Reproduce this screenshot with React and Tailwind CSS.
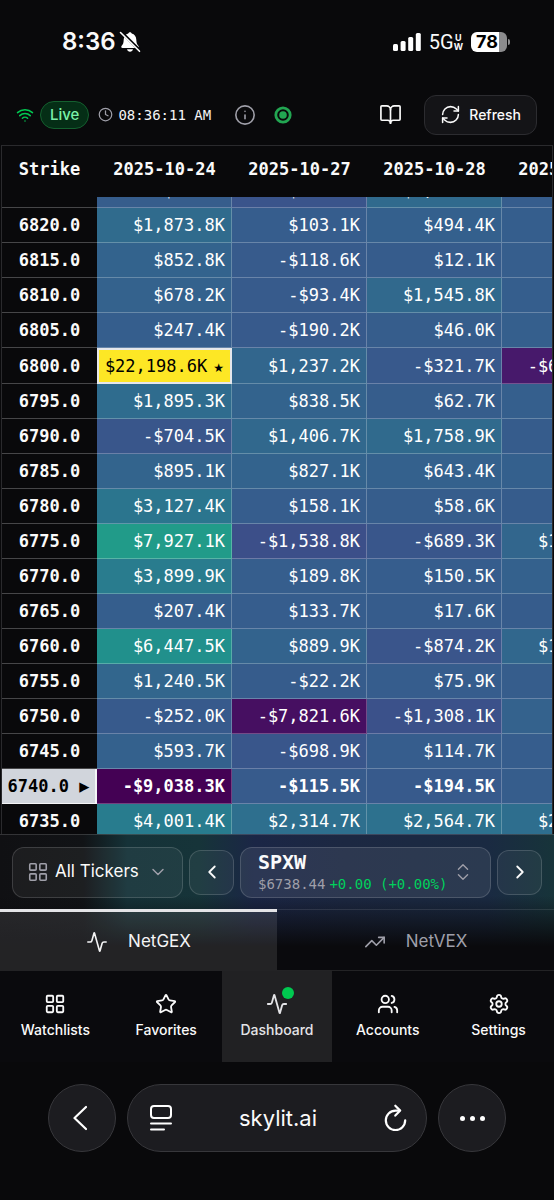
import { useLayoutEffect, useRef } from 'react';
import {
  Activity,
  BookOpen,
  ChevronDown,
  ChevronLeft,
  ChevronRight,
  ChevronsUpDown,
  Clock,
  Info,
  LayoutGrid,
  RefreshCw,
  Settings,
  Star,
  TrendingUp,
  Users,
  Wifi,
} from 'lucide-react';

const VIRIDIS = [
  [68, 1, 84],
  [72, 36, 117],
  [65, 68, 135],
  [53, 95, 141],
  [42, 120, 142],
  [33, 145, 140],
  [34, 168, 132],
  [68, 191, 112],
  [122, 209, 81],
  [189, 223, 38],
  [253, 231, 37],
];

const DATES = ['2025-10-24', '2025-10-27', '2025-10-28', '2025-10-29'];

const ROWS = [
  [6825, 61.2, -956.4, 1764.2, 96.3],
  [6820, 1873.8, 103.1, 494.4, 210.4],
  [6815, 852.8, -118.6, 12.1, 188.2],
  [6810, 678.2, -93.4, 1545.8, 240.7],
  [6805, 247.4, -190.2, 46.0, 315.9],
  [6800, 22198.6, 1237.2, -321.7, -6855.3],
  [6795, 1895.3, 838.5, 62.7, 322.8],
  [6790, -704.5, 1406.7, 1758.9, 2.5],
  [6785, 895.1, 827.1, 643.4, 518.6],
  [6780, 3127.4, 158.1, 58.6, 5.3],
  [6775, 7927.1, -1538.8, -689.3, 1214.5],
  [6770, 3899.9, 189.8, 150.5, 604.1],
  [6765, 207.4, 133.7, 17.6, 4.2],
  [6760, 6447.5, 889.9, -874.2, 1342.6],
  [6755, 1240.5, -22.2, 75.9, 54.8],
  [6750, -252.0, -7821.6, -1308.1, 731.4],
  [6745, 593.7, -698.9, 114.7, 112.9],
  [6740, -9038.3, -115.5, -194.5, 48.6],
  [6735, 4001.4, 2314.7, 2564.7, 2208.3],
];

const SPOT_STRIKE = 6740;
const VALUES = ROWS.flatMap((row) => row.slice(1));
const MIN = Math.min(...VALUES);
const MAX = Math.max(...VALUES);

function heat(value) {
  const t = ((value - MIN) / (MAX - MIN)) * (VIRIDIS.length - 1);
  const i = Math.min(Math.floor(t), VIRIDIS.length - 2);
  const mix = VIRIDIS[i].map((c, k) => Math.round(c + (VIRIDIS[i + 1][k] - c) * (t - i)));
  return `rgb(${mix.join(',')})`;
}

function money(value) {
  const digits = Math.abs(value).toLocaleString('en-US', {
    minimumFractionDigits: 1,
    maximumFractionDigits: 1,
  });
  return `${value < 0 ? '-' : ''}$${digits}K`;
}

function StatusBar() {
  return (
    <div className="flex h-[84px] shrink-0 items-center justify-between pr-11 pl-[62px]">
      <div className="flex items-center gap-[3px]">
        <span className="text-2xl font-semibold">8:36</span>
        <svg width="22" height="22" viewBox="0 0 22 22" aria-label="Silent mode">
          <path
            d="M11 1.2c.9 0 1.6.6 1.7 1.4 2.9.8 4.5 3.1 4.6 6.2.1 3.600.9 4.800 2 6 .9 1 .5 2.200-.9 2.200H3.600c-1.400 0-1.800-1.200-.9-2.200 1.100-1.200 1.900-2.400 2-6 .1-3.100 1.700-5.400 4.600-6.200.1-.8.800-1.400 1.700-1.400z"
            fill="#fff"
          />
          <path d="M8 18.300h6c-.3 1.500-1.500 2.500-3 2.500s-2.700-1-3-2.500z" fill="#fff" />
          <path d="M2.600 1.200 21 19.600" stroke="#09090b" strokeWidth="3" />
          <path d="M1.500 1.500 20.500 20.300" stroke="#fff" strokeWidth="1.600" strokeLinecap="round" />
        </svg>
      </div>
      <div className="flex items-center">
        <svg width="28" height="18" viewBox="0 0 28 18" fill="#fff" aria-label="Signal strength">
          <rect x="0" y="11" width="5" height="7" rx="1.500" />
          <rect x="7.600" y="8" width="5" height="10" rx="1.500" />
          <rect x="15.200" y="4" width="5" height="14" rx="1.500" />
          <rect x="22.800" y="0" width="5" height="18" rx="1.500" />
        </svg>
        <span className="ml-2 font-['Roboto',sans-serif] text-xl">5G</span>
        <span className="flex flex-col items-center text-[9px] leading-[9px] font-bold">
          <span>U</span>
          <span>W</span>
        </span>
        <div className="ml-2 flex items-center gap-px">
          <span className="flex h-5 w-9 items-center justify-center rounded-md bg-linear-to-r from-white from-78% to-[#8b8b8d] to-78% pr-1 text-lg font-bold text-black">
            78
          </span>
          <span className="h-[6px] w-[2px] rounded-r-full bg-[#8b8b8d]" />
        </div>
      </div>
    </div>
  );
}

function Toolbar() {
  return (
    <header className="flex h-[61px] shrink-0 items-center pr-[17px] pl-4">
      <Wifi size={18} className="text-green-500" />
      <span className="ml-1.5 rounded-full border border-[#14602f] bg-[#052e16] px-[9px] py-px text-[15px] leading-6 font-medium text-green-300">
        Live
      </span>
      <Clock size={15} className="ml-[9px] text-zinc-400" />
      <time className="ml-[5px] font-['DejaVu_Sans_Mono',monospace] text-sm whitespace-nowrap text-zinc-100">
        08:36:11 AM
      </time>
      <button type="button" aria-label="Information" className="ml-[23px] text-zinc-400">
        <Info size={22} strokeWidth={1.750} />
      </button>
      <svg width="18" height="18" viewBox="0 0 18 18" className="ml-[18px]" aria-label="Market open">
        <circle cx="9" cy="9" r="7.200" fill="none" stroke="#22a652" strokeWidth="2.800" />
        <circle cx="9" cy="9" r="3.800" fill="#22a652" />
      </svg>
      <button type="button" aria-label="Guide" className="ml-auto">
        <BookOpen size={23} strokeWidth={1.750} />
      </button>
      <button
        type="button"
        className="ml-[22px] flex h-10 items-center gap-2 rounded-xl border border-[#2c2c30] bg-[#141417] px-[15px] text-sm font-medium"
      >
        <RefreshCw size={21} strokeWidth={1.750} />
        Refresh
      </button>
    </header>
  );
}

function ValueCell({ value, bold }) {
  if (value === MAX) {
    return (
      <td
        className="h-9 border-2 border-gray-200 pr-1.5 text-right whitespace-nowrap text-black"
        style={{ backgroundColor: heat(value) }}
      >
        {money(value)}
        <span className="ml-1.5 font-['DejaVu_Sans',sans-serif] text-xs">★</span>
      </td>
    );
  }
  return (
    <td
      className={`h-[35px] border-r border-b border-white/25 pr-1.5 text-right whitespace-nowrap text-white ${bold ? 'font-bold' : ''}`}
      style={{ backgroundColor: heat(value) }}
    >
      {money(value)}
    </td>
  );
}

function HeatTable() {
  const scroller = useRef(null);
  useLayoutEffect(() => {
    scroller.current.scrollTop = 24;
  }, []);
  return (
    <main
      ref={scroller}
      className="mx-px min-h-0 flex-1 overflow-auto border-x border-t border-[#2a2a2d] [scrollbar-width:none]"
    >
      <table className="w-max table-fixed border-separate border-spacing-0 font-['DejaVu_Sans_Mono',monospace] text-[17px] leading-6">
        <colgroup>
          <col className="w-[95px]" />
          {DATES.map((date) => (
            <col key={date} className="w-[135px]" />
          ))}
        </colgroup>
        <thead>
          <tr>
            <th scope="col" className="sticky top-0 left-0 z-20 h-[51px] w-[95px] bg-[#09090b] pb-1.5">
              Strike
            </th>
            {DATES.map((date) => (
              <th key={date} scope="col" className="sticky top-0 z-10 h-[51px] w-[135px] bg-[#09090b] pb-1.5">
                {date}
              </th>
            ))}
          </tr>
        </thead>
        <tbody>
          {ROWS.map(([strike, ...values]) => {
            const spot = strike === SPOT_STRIKE;
            return (
              <tr key={strike}>
                <th
                  scope="row"
                  className={
                    spot
                      ? 'sticky left-0 border-r-2 border-b border-gray-100 bg-gray-300 whitespace-nowrap text-black'
                      : 'sticky left-0 border-b border-white/25 bg-[#09090b]'
                  }
                >
                  {strike.toFixed(1)}
                  {spot && ' ▶'}
                </th>
                {values.map((value, i) => (
                  <ValueCell key={DATES[i]} value={value} bold={spot} />
                ))}
              </tr>
            );
          })}
        </tbody>
      </table>
    </main>
  );
}

function TickerBar() {
  return (
    <div className="flex h-[75px] items-center gap-1.5 border-t border-white/15 px-3">
      <label className="flex h-[51px] w-[171px] items-center rounded-xl border border-white/15 bg-white/5 px-[14px]">
        <LayoutGrid size={22} strokeWidth={1.750} className="shrink-0 text-zinc-400" />
        <select
          aria-label="Ticker list"
          className="ml-1.5 min-w-0 flex-1 appearance-none bg-transparent text-[17px] text-zinc-50 outline-none"
        >
          <option>All Tickers</option>
        </select>
        <ChevronDown size={20} strokeWidth={1.750} className="shrink-0 text-zinc-400" />
      </label>
      <button
        type="button"
        aria-label="Previous ticker"
        className="flex size-[45px] shrink-0 items-center justify-center rounded-xl border border-white/15 bg-white/5"
      >
        <ChevronLeft size={22} />
      </button>
      <button
        type="button"
        aria-haspopup="listbox"
        className="flex h-[51px] min-w-0 flex-1 items-center justify-between rounded-xl border border-white/15 bg-white/8 pr-4 pl-[17px] text-left font-['DejaVu_Sans_Mono',monospace]"
      >
        <span className="flex flex-col">
          <span className="text-xl leading-6 font-bold">SPXW</span>
          <span className="flex gap-1 text-sm leading-5 whitespace-nowrap text-zinc-400">
            $6738.44
            <span className="text-[#00d15c]">+0.00 (+0.00%)</span>
          </span>
        </span>
        <ChevronsUpDown size={22} strokeWidth={1.500} className="shrink-0 text-zinc-400" />
      </button>
      <button
        type="button"
        aria-label="Next ticker"
        className="flex size-[45px] shrink-0 items-center justify-center rounded-xl border border-white/15 bg-white/5"
      >
        <ChevronRight size={22} />
      </button>
    </div>
  );
}

function MetricTabs() {
  return (
    <div role="tablist" className="grid h-[62px] grid-cols-2 text-[17px]">
      <button
        type="button"
        role="tab"
        aria-selected="true"
        className="flex items-center justify-center gap-5 border-t-3 border-zinc-200 bg-white/10 text-zinc-100"
      >
        <Activity size={22} strokeWidth={1.750} />
        NetGEX
      </button>
      <button
        type="button"
        role="tab"
        aria-selected="false"
        className="flex items-center justify-center gap-5 border-y border-white/10 pt-1 text-zinc-400"
      >
        <TrendingUp size={22} strokeWidth={1.750} />
        NetVEX
      </button>
    </div>
  );
}

const NAV = [
  { label: 'Watchlists', Icon: LayoutGrid },
  { label: 'Favorites', Icon: Star },
  { label: 'Dashboard', Icon: Activity, active: true },
  { label: 'Accounts', Icon: Users },
  { label: 'Settings', Icon: Settings },
];

function BottomNav() {
  return (
    <nav className="grid h-[91px] shrink-0 grid-cols-5 bg-[#0a0a0d]">
      {NAV.map(({ label, Icon, active }) => (
        <a
          key={label}
          href={`#${label.toLowerCase()}`}
          aria-current={active ? 'page' : undefined}
          className={`flex flex-col items-center gap-[5px] pt-[22px] text-sm font-medium ${active ? 'bg-[#212123] text-zinc-200' : 'text-zinc-50'}`}
        >
          <span className="relative">
            <Icon size={22} />
            {active && <span className="absolute -top-1.5 -right-1.5 size-3 rounded-full bg-[#00c950]" />}
          </span>
          {label}
        </a>
      ))}
    </nav>
  );
}

function BrowserBar() {
  const surface = 'border border-[#37373b] bg-[#1c1c20]';
  return (
    <footer className="flex h-[138px] shrink-0 justify-center gap-[11px] px-12 pt-[22px]">
      <button
        type="button"
        aria-label="Back"
        className={`flex size-[68px] shrink-0 items-center justify-center rounded-full pr-1 ${surface}`}
      >
        <svg width="14" height="26" viewBox="0 0 14 26" fill="none" stroke="#fff" strokeWidth="2.200" strokeLinecap="round" strokeLinejoin="round">
          <path d="M13 2 1.500 13 13 24" />
        </svg>
      </button>
      <div className={`flex h-[68px] flex-1 items-center justify-between rounded-full pr-[19px] pl-[22px] text-[22px] ${surface}`}>
        <button type="button" aria-label="Page menu">
          <svg width="22" height="26" viewBox="0 0 22 26" fill="none" stroke="#fff" strokeWidth="2" strokeLinecap="round">
            <rect x="1" y="1" width="20" height="12" rx="3" />
            <path d="M1 18.500h20M1 24.500h13" />
          </svg>
        </button>
        <span>skylit.ai</span>
        <button type="button" aria-label="Reload">
          <svg width="23" height="28" viewBox="0 0 23 28" fill="none" stroke="#fff" strokeWidth="2.200" strokeLinecap="round" strokeLinejoin="round">
            <path d="M15.500 6.600h-4a9.700 9.700 0 1 0 9.700 9.700" />
            <path d="m11.300 1.700 4.900 4.900-4.900 5" />
          </svg>
        </button>
      </div>
      <button
        type="button"
        aria-label="More"
        className={`flex size-[68px] shrink-0 items-center justify-center gap-[5px] rounded-full ${surface}`}
      >
        <span className="size-[5px] rounded-full bg-white" />
        <span className="size-[5px] rounded-full bg-white" />
        <span className="size-[5px] rounded-full bg-white" />
      </button>
    </footer>
  );
}

export default function App() {
  return (
    <div className="flex h-screen flex-col bg-[#09090b] font-['Inter',sans-serif] text-zinc-50">
      <StatusBar />
      <Toolbar />
      <HeatTable />
      <div className="shrink-0 bg-[linear-gradient(to_bottom,transparent,transparent_45%,#0a0a0d_82%),linear-gradient(to_right,#101013_0%,#111316_15%,#153238_23%,#163439_36%,#1b2646_46%,#1c2842_62%,#1a2a42_88%,#17343a_100%)]">
        <TickerBar />
        <MetricTabs />
      </div>
      <BottomNav />
      <BrowserBar />
    </div>
  );
}
